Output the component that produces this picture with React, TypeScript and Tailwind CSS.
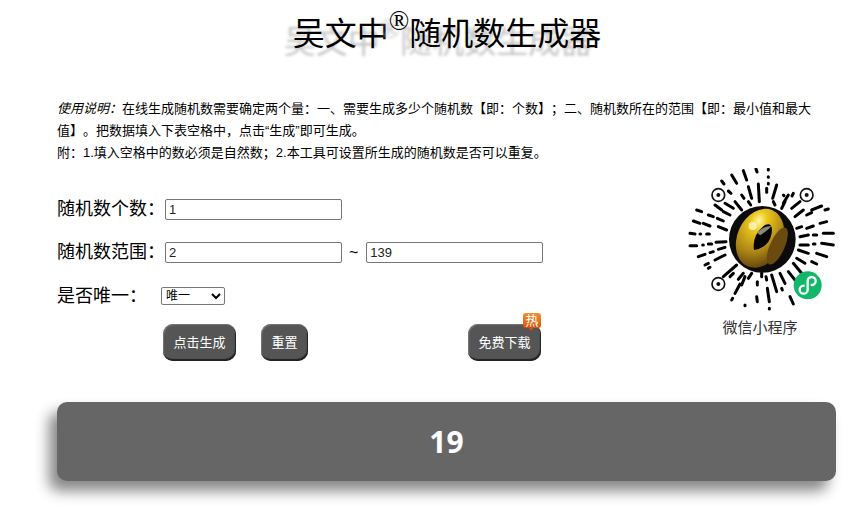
const segs: number[][] = [
[190,32,200,60],[228,27,231,36],[265,28,265,30],[265,50,265,52],[265,70,265,72],[260,85,260,97],[155,45,170,70],[125,63,132,72],[205,80,215,115],[290,75,278,115],[235,72,238,125],[145,93,153,100],[185,105,192,115],[310,105,312,107],[340,100,336,108],[165,125,185,150],[105,135,125,150],[50,150,65,155],[85,165,100,170],[40,183,60,190],[70,190,90,198],[112,175,130,183],[115,200,140,210],[30,220,45,222],[60,222,62,222],[80,222,88,222],[30,257,50,257],[68,255,70,255],[85,252,95,252],[108,247,138,245],[55,290,75,283],[90,278,100,275],[115,268,135,262],[75,315,85,310],[105,300,135,285],[130,350,170,315],[85,325,90,322],[395,150,420,140],[435,150,445,147],[335,145,360,125],[345,170,370,150],[380,165,395,158],[420,190,440,185],[380,205,400,198],[350,205,365,200],[360,230,385,225],[400,225,410,225],[430,220,460,220],[360,255,385,255],[400,252,405,252],[425,250,460,255],[355,270,385,280],[410,280,440,290],[350,295,375,310],[395,305,410,312],[340,310,365,340],[165,400,180,372],[195,350,185,375],[155,420,158,415],[195,435,195,437],[230,410,232,425],[232,365,232,375],[258,350,260,360],[262,385,268,425],[268,445,268,447],[275,345,290,395],[300,340,315,370],[325,335,345,360],[305,385,307,390],[330,410,340,432],[215,340,205,355],[160,340,150,350],[190,340,175,358],[245,340,245,350],[310,130,325,105],[280,125,285,135],[205,125,212,135],[135,130,160,145],[130,155,150,165],[305,145,315,125],[420,140,425,138]];
const finders = [[115,105],[380,105],[115,372]];

function Qr() {
  return (
    <svg width="156" height="146" viewBox="0 0 468 438" className="block">
      <defs>
        <radialGradient id="gold" cx="32%" cy="25%" r="85%">
          <stop offset="0" stopColor="#fff6a8" />
          <stop offset="0.2" stopColor="#ecc81c" />
          <stop offset="0.6" stopColor="#b08a16" />
          <stop offset="1" stopColor="#5a3d0a" />
        </radialGradient>
      </defs>
      <g transform="translate(0,-24)">
        {segs.map((s, i) => (
          <line key={i} x1={s[0]} y1={s[1]} x2={s[2]} y2={s[3]} stroke="#000" strokeWidth="9" strokeLinecap="round" />
        ))}
        {finders.map((f, i) => (
          <g key={i}>
            <circle cx={f[0]} cy={f[1]} r="19" fill="#fff" stroke="#111" strokeWidth="5" />
            <circle cx={f[0]} cy={f[1]} r="6" fill="#111" />
          </g>
        ))}
        <circle cx="247" cy="238" r="100" fill="#0b0b0b" />
        <ellipse cx="240" cy="235" rx="68" ry="92" transform="rotate(24 240 235)" fill="url(#gold)" />
        <ellipse cx="292" cy="258" rx="22" ry="60" transform="rotate(24 292 258)" fill="#6b4a10" />
        <path d="M222 270 Q215 225 255 195 Q280 185 275 220 Q268 262 222 270 Z" fill="#050505" />
        <path d="M232 218 Q250 197 274 198 Q268 208 240 226 Z" fill="#8a8a7a" />
        <circle cx="218" cy="198" r="12" fill="#fff8c0" opacity="0.8" />
        <circle cx="383" cy="376" r="42" fill="#12b76a" />
        <path d="M371 377 a12 12 0 1 0 12 12 v-26 a12 12 0 1 1 12 12" fill="none" stroke="#fff" strokeWidth="7" strokeLinecap="round" />
      </g>
    </svg>
  );
}

const btn = "h-[37px] rounded-[10px] bg-[#555555] text-[13px] text-white shadow-[inset_-1px_-2px_1px_#222,inset_1px_1px_1px_#777]";
const input = "h-[21px] w-[177px] rounded-[2px] border border-[#767676] bg-white px-[3px] text-[13px] text-[#222]";

export default function App() {
  return (
    <div className="h-[508px] w-[856px] overflow-hidden bg-white font-['Liberation_Sans','Noto_Sans_CJK_SC',sans-serif] text-black [text-spacing-trim:space-all]">
      <h1 className="flex h-[98px] justify-center pt-[12px] pl-[38px] text-[32px] leading-[44px] font-normal [text-shadow:-9px_8px_3px_#c4c4c4]">
        吴文中<sup className="relative -top-[4px] text-[27px] leading-none font-['Liberation_Serif',serif]">®</sup>随机数生成器
      </h1>
      <div className="ml-[57px] w-[779px]">
        <p className="w-[762px] text-[13px] leading-[22px]">
          <em>{"使用说明\uFF1A"}</em>{"在线生成随机数需要确定两个量\uFF1A一、需要生成多少个随机数【即\uFF1A个数】\uFF1B二、随机数所在的范围【即\uFF1A最小值和最大值】。把数据填入下表空格中\uFF0C点击“生成”即可生成。"}
          <br />
          {"附\uFF1A1.填入空格中的数必须是自然数\uFF1B2.本工具可设置所生成的随机数是否可以重复。"}
        </p>
        <div className="mt-[4px] flex justify-between">
          <div className="w-[490px] pt-[31px]">
            <div className="flex h-[21px] items-center">
              <span className="w-[108px] text-[18px] whitespace-nowrap">{"随机数个数\uFF1A"}</span>
              <input className={input} defaultValue="1" readOnly />
            </div>
            <div className="mt-[22px] flex h-[21px] items-center">
              <span className="w-[108px] text-[18px] whitespace-nowrap">{"随机数范围\uFF1A"}</span>
              <input className={input} defaultValue="2" readOnly />
              <span className="mr-[8px] ml-[7px] text-[16px]">~</span>
              <input className={input} defaultValue="139" readOnly />
            </div>
            <div className="mt-[24px] flex h-[18px] items-center">
              <span className="w-[104px] text-[18px] whitespace-nowrap">{"是否唯一\uFF1A"}</span>
              <select className="h-[18px] w-[64px] appearance-auto rounded-[2px] border border-[#767676] bg-white text-[12px]" defaultValue="唯一">
                <option>唯一</option>
                <option>可重复</option>
              </select>
            </div>
            <div className="mt-[19px] ml-[106px] flex w-[378px]">
              <button className={`${btn} w-[73px]`}>点击生成</button>
              <button className={`${btn} ml-[25px] w-[47px]`}>重置</button>
              <button className={`${btn} relative ml-auto w-[73px]`}>
                免费下载
                <span className="absolute -top-[11px] right-0 flex h-[15px] w-[18px] items-center justify-center rounded-[3px] bg-gradient-to-b from-[#f09030] to-[#d8500c] text-[13px] leading-none after:absolute after:top-[14px] after:left-[5px] after:border-x-[3px] after:border-t-[4px] after:border-x-transparent after:border-t-[#d8500c]">
                  热
                </span>
              </button>
            </div>
          </div>
          <div className="flex w-[156px] flex-col items-center">
            <Qr />
            <span className="mt-[4px] ml-[4px] text-[15px] leading-[20px] text-[#333]">微信小程序</span>
          </div>
        </div>
        <div className="mt-[41px] flex h-[79px] items-center justify-center rounded-[10px] bg-[#666666] font-['Open_Sans',sans-serif] text-[30px] font-bold text-white shadow-[-8px_10px_14px_#888]">
          19
        </div>
      </div>
    </div>
  );
}
